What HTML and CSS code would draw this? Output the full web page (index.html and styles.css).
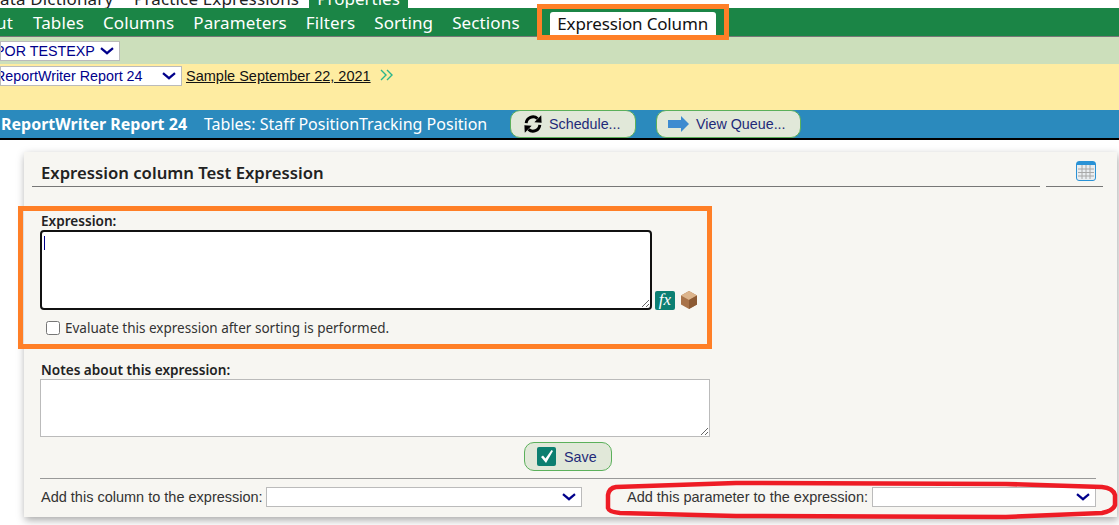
FILE: index.html
```html
<!DOCTYPE html>
<html lang="en">
<head>
<meta charset="utf-8">
<title>Expression Column</title>
<link rel="stylesheet" href="styles.css">
</head>
<body>
<div class="page">
  <div class="crumbs">
    <span class="crumb crumb-a">ata Dictionary</span>
    <span class="crumb crumb-b">Practice Expressions</span>
    <span class="crumb crumb-tab">Properties</span>
  </div>
  <nav class="nav">
    <span class="nav-item nav-first">ut</span>
    <span class="nav-item">Tables</span>
    <span class="nav-item">Columns</span>
    <span class="nav-item">Parameters</span>
    <span class="nav-item">Filters</span>
    <span class="nav-item">Sorting</span>
    <span class="nav-item">Sections</span>
    <span class="nav-active">Expression Column</span>
  </nav>
  <div class="band-green">
    <select class="sel sel-a"><option>POR TESTEXP</option></select>
  </div>
  <div class="band-yellow">
    <select class="sel sel-b"><option>ReportWriter Report 24</option></select>
    <a class="sample" href="#">Sample September 22, 2021</a>
    <svg class="dbl" width="14" height="12" viewBox="0 0 14 12"><path d="M1 1l5 5-5 5M7 1l5 5-5 5" fill="none" stroke="#2bb58c" stroke-width="1.4"/></svg>
  </div>
  <div class="band-blue">
    <strong class="report">ReportWriter Report 24</strong>
    <span class="tables">Tables: Staff PositionTracking Position</span>
    <button class="btn btn-sched" type="button">
      <svg width="20" height="20" viewBox="0 0 22 22"><path d="M3.500 10a7.500 7.500 0 0 1 12.500-5" fill="none" stroke="#000" stroke-width="3.200"/><path d="M12.500 9l8 .5-.5-8z" fill="#000"/><path d="M18.500 12a7.500 7.500 0 0 1-12.500 5" fill="none" stroke="#000" stroke-width="3.200"/><path d="M9.500 13l-8-.5.5 8z" fill="#000"/></svg>
      <span>Schedule...</span>
    </button>
    <button class="btn btn-queue" type="button">
      <svg width="21" height="16" viewBox="0 0 21 16"><path d="M0 4h13V0l8 8-8 8v-4H0z" fill="#3d8bd0"/></svg>
      <span>View Queue...</span>
    </button>
  </div>
  <main class="panel">
    <header class="panel-head">
      <h1 class="panel-title">Expression column Test Expression</h1>
      <div class="panel-tool">
        <svg width="20" height="20" viewBox="0 0 20 20"><rect x=".5" y=".5" width="19" height="19" rx="2.500" fill="#e9edf0" stroke="#2a92d6"/><rect x="1" y="1" width="18" height="3" fill="#2a92d6"/><path d="M2 8h16M2 11.500h16M2 15h16M6 4v14M10 4v14M14 4v14" stroke="#a8a8a8"/></svg>
      </div>
    </header>
    <section class="expr">
      <label class="lbl">Expression:</label>
      <div class="expr-row">
        <textarea class="ta-main"></textarea>
        <span class="caret"></span>
        <span class="fx">fx</span>
        <svg class="cube" width="18" height="20" viewBox="0 0 18 20"><path d="M9 1l8 4.500v9L9 19l-8-4.500v-9z" fill="#a8734a"/><path d="M9 1l8 4.500L9 10 1 5.500z" fill="#dcb48c"/><path d="M9 10l8-4.500v9L9 19z" fill="#8c5a34"/></svg>
      </div>
      <label class="chk"><input type="checkbox"><span>Evaluate this expression after sorting is performed.</span></label>
    </section>
    <section class="notes">
      <label class="lbl">Notes about this expression:</label>
      <textarea class="ta-notes"></textarea>
      <div class="save-row">
        <button class="btn btn-save" type="button">
          <svg width="19" height="19" viewBox="0 0 19 19"><rect width="19" height="19" rx="2" fill="#0c7f70"/><path d="M4 10l2-1.500 2.500 3L14.500 3l1.500 1L9 16z" fill="#fff"/></svg>
          <span>Save</span>
        </button>
      </div>
    </section>
    <footer class="add-row">
      <label class="add add-col">Add this column to the expression:<select class="sel add-sel-a"><option></option></select></label>
      <label class="add add-par">Add this parameter to the expression:<select class="sel add-sel-b"><option></option></select></label>
    </footer>
  </main>
  <div class="mark mark-tab"></div>
  <div class="mark mark-expr"></div>
  <svg class="mark-red" width="512" height="38" viewBox="0 0 512 38"><path d="M10 6Q3 7 2 14L2 27Q3 31 14 32L130 35 400 36 496 32Q507 30 509 24L509 14Q507 7 496 6L400 3 130 2Z" fill="none" stroke="#ee1c25" stroke-width="4.500" stroke-linejoin="round"/></svg>
</div>
</body>
</html>
```
FILE: styles.css
```css
* { box-sizing: border-box; }
html, body { margin: 0; background: #fff; }
body { overflow: hidden; }
.page {
  position: relative;
  width: 1119px;
  height: 525px;
  overflow: hidden;
  font-family: "Liberation Sans", Arial, sans-serif;
}
.crumbs {
  height: 8px;
  overflow: hidden;
  display: flex;
  align-items: flex-start;
  font-family: "Noto Sans", sans-serif;
  font-size: 17px;
  letter-spacing: .15px;
  line-height: 16px;
  color: #222;
}
.crumb { display: block; height: 16px; margin-top: -9px; flex: none; white-space: nowrap; }
.crumb-a { width: 134px; }
.crumb-b { width: 175px; }
.crumb-tab { width: 99px; height: 20px; background: #1b8546; color: #fff; text-align: center; letter-spacing: 0; }
.nav {
  height: 29px;
  display: flex;
  align-items: flex-end;
  gap: 19px;
  background: #1b8546;
  border-bottom: 1px solid #777;
  font-family: "Noto Sans", sans-serif;
  font-size: 17px;
  line-height: 30px;
  letter-spacing: .12px;
  color: #fff;
}
.nav-item { display: block; height: 28px; }
.nav-first { width: 18px; margin-left: -4px; }
.nav-active {
  margin-left: 11px;
  height: 24px;
  width: 166px;
  line-height: 24px;
  letter-spacing: -.15px;
  background: #fff;
  color: #111;
  border-radius: 3px 3px 0 0;
  white-space: nowrap;
  text-align: center;
}
.band-green {
  height: 27px;
  background: #ccdfbb;
  padding-top: 4px;
}
.sel {
  appearance: none;
  -webkit-appearance: none;
  border: 1px solid #bbb;
  border-radius: 0;
  background-color: #fff;
  background-image: url("data:image/svg+xml,%3Csvg xmlns='http://www.w3.org/2000/svg' width='14' height='8'%3E%3Cpath d='M1 1.200l6 5 6-5' fill='none' stroke='%2300008b' stroke-width='2.200'/%3E%3C/svg%3E");
  background-repeat: no-repeat;
  background-position: right 5px center;
  color: #00008b;
  font-family: "Liberation Sans", Arial, sans-serif;
  font-size: 14.300px;
  height: 20px;
  padding: 0 20px 0 0;
  margin: 0;
  display: block;
}
.sel-a { width: 120px; text-indent: -6px; }
.sel-b { width: 182px; text-indent: -6px; }
.band-yellow {
  height: 46px;
  background: #feeca1;
  display: flex;
  align-items: flex-start;
  padding-top: 2px;
}
.sample {
  margin-left: 4px;
  color: #111;
  font-size: 14.500px;
  line-height: 20px;
  text-decoration: underline;
}
.dbl { margin: 3px 0 0 9px; }
.band-blue {
  height: 30px;
  background: #2b8abd;
  border-bottom: 2px solid #000;
  display: flex;
  align-items: flex-start;
  padding-left: 1px;
  color: #fff;
  font-family: "Noto Sans", sans-serif;
  font-size: 16px;
  line-height: 28px;
}
.report { font-weight: 700; width: 203px; }
.tables { width: 306px; }
.btn {
  display: flex;
  align-items: center;
  padding: 0;
  height: 28px;
  background: #e1e8d9;
  border: 1px solid #5bb05b;
  border-radius: 10px;
  color: #1e2a78;
  font-family: "Liberation Sans", Arial, sans-serif;
  font-size: 14.300px;
}
.btn-sched { width: 126px; padding-left: 12px; gap: 6px; }
.btn-queue { width: 145px; margin-left: 20px; padding-left: 11px; gap: 7px; }
.panel {
  width: 1093px;
  height: 365px;
  margin: 12px 0 0 24px;
  padding: 0 8px;
  background: #f7f6f2;
  box-shadow: 1px 3px 8px rgba(0,0,0,.35);
}
.panel-head {
  display: flex;
  height: 35px;
  gap: 6px;
}
.panel-title {
  margin: 0;
  flex: 0 0 1008px;
  padding-left: 9px;
  border-bottom: 1px solid #777;
  font-family: "Noto Sans", sans-serif;
  font-size: 16.700px;
  font-weight: 600;
  line-height: 42px;
  height: 35px;
  color: #222;
}
.panel-tool {
  flex: 0 0 57px;
  border-bottom: 1px solid #777;
  padding: 9px 0 0 30px;
}
.expr { padding: 24px 0 0 8px; height: 174px; }
.lbl {
  display: block;
  padding-left: 1px;
  font-family: "Noto Sans", sans-serif;
  font-size: 13.600px;
  font-weight: 600;
  line-height: 19px;
  color: #222;
}
.expr-row { position: relative; display: flex; align-items: flex-end; height: 80px; }
.caret {
  position: absolute;
  left: 4px;
  top: 6px;
  width: 1px;
  height: 14px;
  background: #00008b;
}
.ta-main {
  width: 612px;
  height: 80px;
  margin: 0;
  border: 2px solid #111;
  border-radius: 4px;
  background: #fff;
  outline: none;
  display: block;
}
.fx {
  width: 20px;
  height: 19px;
  margin: 0 0 0 3px;
  background: #0c8073;
  border-radius: 2px;
  color: #fff;
  font-family: "Liberation Serif", serif;
  font-style: italic;
  font-size: 17px;
  line-height: 18px;
  text-align: center;
}
.cube { margin: 0 0 0 5px; }
.chk {
  display: flex;
  align-items: center;
  gap: 5px;
  margin: 9px 0 0 6px;
  font-family: "Noto Sans", sans-serif;
  font-size: 13.500px;
  line-height: 18px;
  color: #333;
}
.chk input { width: 14px; height: 14px; margin: 0; }
.notes { padding: 0 0 0 8px; height: 117px; }
.notes .lbl { line-height: 17px; }
.ta-notes {
  display: block;
  width: 670px;
  height: 58px;
  background: #fff;
  border: 1px solid #bbb;
  border-radius: 0;
  margin: 1px 0 0;
}
.save-row { width: 1056px; display: flex; justify-content: center; margin-top: 5px; }
.btn-save { width: 88px; height: 29px; padding-left: 12px; gap: 8px; }
.add-row {
  margin: 0 13px 0 8px;
  border-top: 1px solid #999;
  display: flex;
  padding: 8px 0 0 1px;
  font-size: 14.500px;
  color: #333;
}
.add {
  display: flex;
  align-items: center;
  white-space: nowrap;
  height: 20px;
}
.add-col { width: 586px; }
.add-sel-a { width: 316px; margin-left: 3px; }
.add-sel-b { width: 224px; margin-left: 4px; }
.mark {
  position: absolute;
  border: 5px solid #ff7f27;
  pointer-events: none;
}
.mark-tab { left: 537px; top: 4px; width: 192px; height: 36px; }
.mark-expr { left: 18px; top: 206px; width: 694px; height: 143px; }
.mark-red { position: absolute; left: 606px; top: 481px; overflow: visible; }
```
